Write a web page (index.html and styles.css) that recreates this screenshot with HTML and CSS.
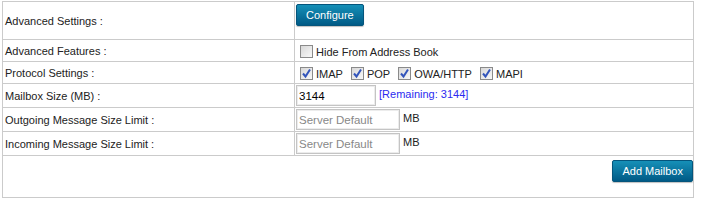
FILE: index.html
```html
<!DOCTYPE html>
<html lang="en">
<head>
    <meta charset="UTF-8">
    <title>Add Mailbox</title>
    <link rel="stylesheet" href="styles.css">
</head>
<body>
    <!-- mailbox settings -->
    <table class="settings">
        <tr class="row-tall">
            <td class="label">Advanced Settings :</td>
            <td class="value"><button class="btn btn-config">Configure</button></td>
        </tr>
        <tr>
            <td class="label">Advanced Features :</td>
            <td class="value">
                <label><input type="checkbox" class="chk">Hide From Address Book</label>
            </td>
        </tr>
        <tr>
            <td class="label">Protocol Settings :</td>
            <td class="value">
                <label><input type="checkbox" class="chk" checked>IMAP</label>
                <label><input type="checkbox" class="chk" checked>POP</label>
                <label><input type="checkbox" class="chk" checked>OWA/HTTP</label>
                <label><input type="checkbox" class="chk" checked>MAPI</label>
            </td>
        </tr>
        <tr class="row-input">
            <td class="label">Mailbox Size (MB) :</td>
            <td class="value">
                <input type="text" class="txt txt-size" value="3144">
                <span class="remaining">[Remaining: 3144]</span>
            </td>
        </tr>
        <tr class="row-input">
            <td class="label">Outgoing Message Size Limit :</td>
            <td class="value">
                <input type="text" class="txt txt-limit" placeholder="Server Default"> MB
            </td>
        </tr>
        <tr class="row-input">
            <td class="label">Incoming Message Size Limit :</td>
            <td class="value">
                <input type="text" class="txt txt-limit" placeholder="Server Default"> MB
            </td>
        </tr>
        <tr class="row-foot">
            <td colspan="2" class="foot"><button class="btn">Add Mailbox</button></td>
        </tr>
    </table>
</body>
</html>
```

FILE: styles.css
```css
body {
    margin: 0;
    padding: 1px 0 0 2px;
    font-family: 'Liberation Sans', Arial, sans-serif;
    font-size: 11px;
    line-height: 14px;
    color: #222;
    background: #fff;
}

.settings {
    border-collapse: collapse;
    width: 692px;
}

.settings td {
    border: 1px solid #cbcbcb;
    padding: 1px;
    height: 19px;
    vertical-align: middle;
}

.settings td.label {
    width: 288px;
    padding-left: 2px;
}

.row-tall td {
    height: 35px;
}

.row-tall .value {
    vertical-align: top;
}

.row-input td {
    height: 20px;
}

.row-foot td {
    height: 37px;
    vertical-align: top;
    text-align: right;
    padding: 4px 0 0 0;
}

.btn {
    height: 22px;
    padding: 0 9px;
    border: 1px solid #05557c;
    border-radius: 2px;
    background: linear-gradient(#1690b8, #005a86);
    color: #fff;
    font-family: 'Liberation Sans', Arial, sans-serif;
    font-size: 11px;
    cursor: pointer;
    box-shadow: 0 1px 1px rgba(0, 0, 0, 0.25);
}

.btn-config {
    margin: 1px 0 0 0;
}

label {
    margin-right: 1px;
}

.chk {
    appearance: none;
    -webkit-appearance: none;
    width: 13px;
    height: 13px;
    margin: 2px 3px 1px 4px;
    vertical-align: -3px;
    border: 1px solid #8a8a8a;
    background: linear-gradient(135deg, #d8d8d8, #f8f8f8);
}

.chk:checked {
    background: url("data:image/svg+xml,%3Csvg xmlns='http://www.w3.org/2000/svg' width='11' height='11'%3E%3Cpath d='M2 5.5 L4.5 8.5 L9 1.5' fill='none' stroke='%233355bb' stroke-width='2'/%3E%3C/svg%3E") center no-repeat,
        linear-gradient(135deg, #d8d8d8, #f8f8f8);
}

.txt {
    height: 21px;
    box-sizing: border-box;
    margin: 0;
    padding: 0 2px;
    border: 1px solid #c4c4c4;
    box-shadow: inset 0 0 0 1px #ececec;
    font-family: 'Liberation Sans', Arial, sans-serif;
    font-size: 11.5px;
    color: #000;
    vertical-align: middle;
}

.txt::placeholder {
    color: #888;
}

.txt-size {
    width: 80px;
}

.txt-limit {
    width: 104px;
}

.remaining {
    color: #2b2bf0;
}
```
